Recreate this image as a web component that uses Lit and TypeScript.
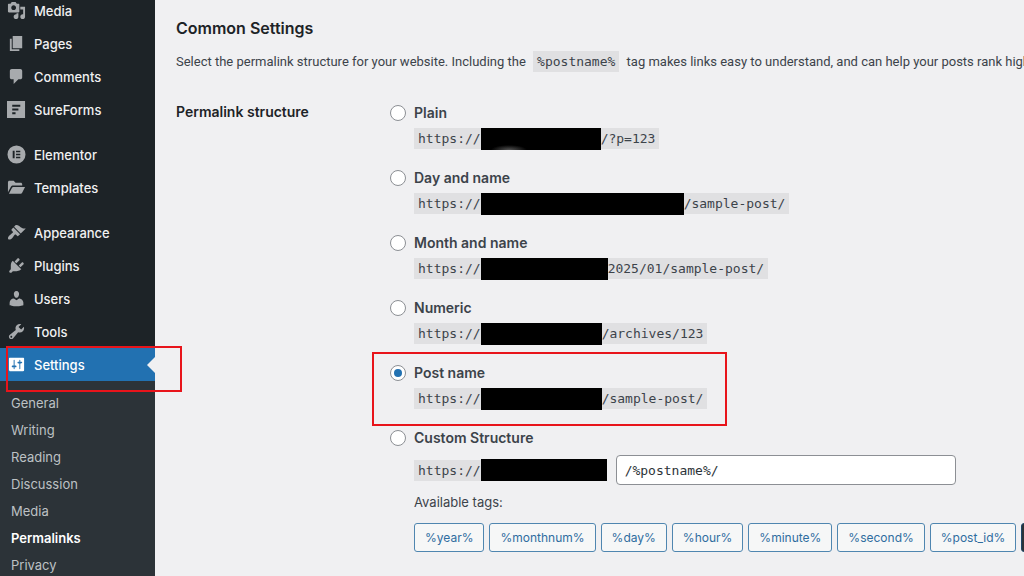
import { LitElement, html, css, svg, nothing } from "lit";
import { customElement, state } from "lit/decorators.js";
import { classMap } from "lit/directives/class-map.js";
import { styleMap } from "lit/directives/style-map.js";

const icons: Record<string, unknown> = {
  media: svg`<path d="M13 11V4c0-.55-.45-1-1-1h-1.67L9 1H5L3.67 3H2c-.55 0-1 .45-1 1v7c0 .55.45 1 1 1h10c.55 0 1-.45 1-1zM7 4.5c1.38 0 2.5 1.12 2.5 2.5S8.38 9.5 7 9.5 4.5 8.38 4.5 7 5.62 4.5 7 4.5zM14 6h5v10.5c0 1.38-1.12 2.5-2.5 2.5S14 17.88 14 16.5s1.12-2.5 2.5-2.5c.17 0 .34.02.5.05V9h-3V6zm-4 8.05V13h2v3.5c0 1.38-1.12 2.5-2.5 2.5S7 17.88 7 16.5 8.12 14 9.5 14c.17 0 .34.02.5.05z"/>`,
  pages: svg`<path d="M6 15V2h10v13H6zm-1 1h8v2H3V5h2v11z"/>`,
  comments: svg`<path d="M5 2h9c1.1 0 2 .9 2 2v7c0 1.1-.9 2-2 2h-2l-5 5v-5H5c-1.1 0-2-.9-2-2V4c0-1.1.9-2 2-2z"/>`,
  sureforms: svg`<path fill-rule="evenodd" d="M0 1h19v18H0zM5.500 5v2.200H14V5zM5.500 8.900v2.200H12V8.900zM5.500 12.800V15H9v-2.200z"/>`,
  elementor: svg`<path fill-rule="evenodd" d="M10 .5a9.5 9.5 0 1 0 0 19 9.5 9.5 0 0 0 0-19zM6 6h2v8H6zM9.5 6H14v1.6H9.500zM9.500 9.200H14v1.600H9.500zM9.500 12.400H14V14H9.500z"/>`,
  templates: svg`<path d="M1 15V4.500C1 3.700 1.700 3 2.500 3H7l2 2h5.500c.8 0 1.500.7 1.500 1.500V8H6.500c-1 0-1.900.5-2.400 1.300zM2 16.500l3.300-6.300c.3-.5.8-.8 1.400-.8H19l-3.200 6.300c-.3.5-.8.8-1.400.8z"/>`,
  appearance: svg`<path d="M14.480 11.060L7.410 3.990l1.500-1.500c.5-.56 2.300-.47 3.510.32 1.210.8 1.430 1.280 2.910 2.100 1.180.64 2.450 1.260 4.450.85zm-.71.71L6.700 4.700 4.930 6.470c-.39.39-.39 1.020 0 1.410l1.060 1.060c.39.39.39 1.030 0 1.420-.6.6-1.430 1.110-2.210 1.690-.35.26-.7.53-1.010.84C1.430 14.230.4 16.080 1.400 17.070c.99 1 2.840-.03 4.180-1.360.31-.31.58-.66.85-1.020.57-.78 1.080-1.610 1.690-2.210.39-.39 1.020-.39 1.410 0l1.060 1.060c.39.39 1.020.39 1.410 0z"/>`,
  plugins: svg`<path d="M13.110 4.360L9.870 7.600 8 5.730l3.240-3.240c.35-.34 1.050-.2 1.560.32.52.51.66 1.210.31 1.550zm-8 1.770l.91-1.120 9.010 9.010-1.190.84c-.71.71-2.630 1.160-3.820 1.160H6.140L4.900 17.260c-.59.59-1.540.59-2.120 0-.59-.58-.59-1.530 0-2.120l1.240-1.240v-3.880c0-1.130.4-3.190 1.090-3.890zm7.260 3.970l3.240-3.240c.34-.35 1.040-.21 1.550.31.52.51.66 1.210.31 1.550l-3.240 3.250z"/>`,
  users: svg`<path d="M10 9.250c-2.270 0-2.730-3.440-2.730-3.440C7 4.020 7.820 2 9.970 2c2.160 0 2.980 2.020 2.710 3.810 0 0-.41 3.440-2.680 3.440zm0 2.570L12.720 10c2.390 0 4.520 2.330 4.520 4.530v2.490s-3.650 1.130-7.240 1.130c-3.650 0-7.240-1.130-7.240-1.130v-2.490c0-2.250 1.940-4.480 4.470-4.480z"/>`,
  tools: svg`<path d="M16.680 9.770c-1.340 1.340-3.300 1.670-4.950.99l-5.410 6.520c-.99.99-2.590.99-3.580 0s-.99-2.590 0-3.570l6.520-5.420c-.68-1.650-.35-3.610.99-4.950 1.280-1.280 3.120-1.620 4.720-1.060l-2.890 2.890 2.820 2.820 2.860-2.870c.53 1.580.18 3.390-1.080 4.650zM3.810 16.210c.4.39 1.040.39 1.430 0 .4-.4.4-1.040 0-1.430-.39-.4-1.030-.4-1.430 0-.39.39-.39 1.030 0 1.430z"/>`,
  settings: svg`<path d="M18 16V4c0-.55-.45-1-1-1H3c-.55 0-1 .45-1 1v12c0 .55.45 1 1 1h14c.55 0 1-.45 1-1zM8 11h1c.55 0 1 .45 1 1s-.45 1-1 1H8v1.500c0 .28-.22.5-.5.5s-.5-.22-.5-.5V13H6c-.55 0-1-.45-1-1s.45-1 1-1h1V5.500c0-.28.22-.5.5-.5s.5.22.5.5V11zm5-2h-1c-.55 0-1-.45-1-1s.45-1 1-1h1V5.500c0-.28.22-.5.5-.5s.5.22.5.5V7h1c.55 0 1 .45 1 1s-.45 1-1 1h-1v5.500c0 .28-.22.5-.5.5s-.5-.22-.5-.5V9z"/>`,
};

const menuGroups = [
  ["Media", "Pages", "Comments", "SureForms"],
  ["Elementor", "Templates"],
  ["Appearance", "Plugins", "Users", "Tools", "Settings"],
];

const submenu = ["General", "Writing", "Reading", "Discussion", "Media", "Permalinks", "Privacy"];

const structures = [
  { id: "plain", label: "Plain", hidden: 120, tail: "/?p=123", glow: true },
  { id: "day", label: "Day and name", hidden: 203, tail: "/sample-post/" },
  { id: "month", label: "Month and name", hidden: 127, tail: "2025/01/sample-post/" },
  { id: "numeric", label: "Numeric", hidden: 121, tail: "/archives/123" },
  { id: "postname", label: "Post name", hidden: 121, tail: "/sample-post/", marked: true },
];

const tags = ["year", "monthnum", "day", "hour", "minute", "second", "post_id", "postname"];

@customElement("app-root")
export class AppRoot extends LitElement {
  @state() private selected = "postname";

  static styles = css`
    :host {
      display: flex;
      height: 100vh;
      overflow: hidden;
      background: #f0f0f2;
      color: #3c434a;
      font: 13px/20px Inter, "Liberation Sans", sans-serif;
    }
    * {
      box-sizing: border-box;
    }
    ul {
      list-style: none;
      margin: 0;
      padding: 0;
    }
    .sidebar {
      flex: 0 0 155px;
      background: #1d2327;
    }
    .menu {
      display: flex;
      flex-direction: column;
      gap: 12px;
      margin-top: -6px;
    }
    .item {
      position: relative;
      display: flex;
      align-items: center;
      gap: 8px;
      height: 33px;
      padding-left: 7px;
      color: #f0f0f1;
      font-size: 13px;
      font-weight: 500;
      text-decoration: none;
    }
    .icon {
      flex: none;
      width: 19px;
      height: 19px;
      fill: #a7aaad;
    }
    .current {
      background: #2271b1;
      color: #fff;
    }
    .current .icon {
      fill: #fff;
    }
    .current::before {
      content: "";
      position: absolute;
      right: 0;
      border: 8px solid transparent;
      border-left: 0;
      border-right-color: #f0f0f2;
    }
    .mark {
      position: absolute;
      border: 2px solid #e8141b;
      pointer-events: none;
    }
    .mark-menu {
      inset: -2px -27px -11px 6px;
      z-index: 1;
    }
    .mark-option {
      inset: -10px -20px -17px -18px;
    }
    .submenu {
      background: #2c3338;
      padding: 9px 0 12px 11px;
    }
    .sub {
      display: block;
      color: #bdc1c4;
      font-size: 13px;
      line-height: 27px;
      text-decoration: none;
    }
    .sub-current {
      color: #fff;
      font-weight: 600;
    }
    .content {
      flex: 1;
      min-width: 0;
      padding: 16px 0 0 21px;
    }
    h2 {
      margin: 0;
      color: #1d2327;
      font-size: 16px;
      line-height: 24px;
      font-weight: 600;
    }
    .intro {
      margin: 11px 0 29px;
      font-family: Roboto, Inter, sans-serif;
      line-height: 22px;
      white-space: nowrap;
    }
    .intro code {
      margin: 0 4px;
    }
    code {
      display: inline-flex;
      align-items: center;
      height: 21px;
      padding: 0 4px;
      background: #e0e0e2;
      color: #3c434a;
      font: 13px/21px "DejaVu Sans Mono", monospace;
      white-space: nowrap;
    }
    .form-row {
      display: grid;
      grid-template-columns: 214px minmax(0, 1fr);
    }
    .row-title {
      color: #1d2327;
      font-size: 14px;
      font-weight: 600;
    }
    .options {
      display: flex;
      flex-direction: column;
      align-items: flex-start;
      gap: 18px;
    }
    .option {
      position: relative;
      display: grid;
      grid-template-columns: 16px auto;
      column-gap: 8px;
      row-gap: 5px;
      align-items: center;
    }
    .option label {
      font-size: 14px;
      line-height: 21px;
      font-weight: 600;
    }
    .detail {
      grid-column: 2;
      display: flex;
      align-items: center;
      gap: 9px;
    }
    .radio {
      appearance: none;
      display: grid;
      place-content: center;
      width: 16px;
      height: 16px;
      margin: 0;
      border: 1px solid #8c8f94;
      border-radius: 50%;
      background: #fff;
    }
    .radio:checked::before {
      content: "";
      width: 8px;
      height: 8px;
      border-radius: 50%;
      background: #2271b1;
    }
    .redacted {
      height: 22px;
      background: #000;
    }
    .glow {
      background: radial-gradient(ellipse 18px 5px at 28px 22px, #555, #000);
    }
    .open-end {
      padding-right: 0;
    }
    .pattern {
      width: 340px;
      height: 30px;
      padding: 0 8px;
      border: 1px solid #8c8f94;
      border-radius: 4px;
      background: #fff;
      color: #2c3338;
      font: 13px/20px "DejaVu Sans Mono", monospace;
    }
    .custom {
      row-gap: 7px;
    }
    .available {
      grid-column: 2;
    }
    .tags {
      grid-column: 2;
      display: flex;
      gap: 5px;
      margin-top: 4px;
    }
    .tag {
      flex: none;
      height: 29px;
      padding: 0 10px;
      border: 1px solid #4f86b0;
      border-radius: 3px;
      background: #f6f7f7;
      color: #2f6d9f;
      font: 12px/20px Inter, "Liberation Sans", sans-serif;
    }
    .tag-active {
      border-color: #1d4568;
      background: #2c3338;
      color: #fff;
    }
  `;

  private renderIcon(name: string) {
    return html`<svg class="icon" viewBox="0 0 20 20" aria-hidden="true">${icons[name]}</svg>`;
  }

  private renderItem(name: string) {
    const current = name === "Settings";
    return html`<li>
      <a href="#" class=${classMap({ item: true, current })}>
        ${this.renderIcon(name.toLowerCase())}${name}
        ${current ? html`<span class="mark mark-menu"></span>` : nothing}
      </a>
    </li>`;
  }

  private renderRadio(id: string) {
    return html`<input
      class="radio"
      type="radio"
      name="structure"
      id=${id}
      .checked=${this.selected === id}
      @change=${() => (this.selected = id)}
    />`;
  }

  private renderAddress(width: number, tail = "", glow = false) {
    return html`<code class=${classMap({ "open-end": !tail })}
      >https://<span
        class=${classMap({ redacted: true, glow })}
        style=${styleMap({ width: `${width}px` })}
      ></span
      >${tail}</code
    >`;
  }

  render() {
    return html`
      <nav class="sidebar">
        <div class="menu">
          ${menuGroups.map((group) => html`<ul>${group.map((name) => this.renderItem(name))}</ul>`)}
        </div>
        <ul class="submenu">
          ${submenu.map(
            (name) => html`<li>
              <a href="#" class=${classMap({ sub: true, "sub-current": name === "Permalinks" })}>${name}</a>
            </li>`
          )}
        </ul>
      </nav>
      <main class="content">
        <h2>Common Settings</h2>
        <p class="intro">
          Select the permalink structure for your website. Including the <code>%postname%</code> tag makes
          links easy to understand, and can help your posts rank higher.
        </p>
        <div class="form-row" role="radiogroup" aria-labelledby="row-title">
          <div class="row-title" id="row-title">Permalink structure</div>
          <div class="options">
            ${structures.map(
              (s) => html`<div class="option">
                ${this.renderRadio(s.id)}<label for=${s.id}>${s.label}</label>
                <div class="detail">${this.renderAddress(s.hidden, s.tail, s.glow)}</div>
                ${s.marked ? html`<span class="mark mark-option"></span>` : nothing}
              </div>`
            )}
            <div class="option custom">
              ${this.renderRadio("custom")}<label for="custom">Custom Structure</label>
              <div class="detail">
                ${this.renderAddress(126)}
                <input class="pattern" type="text" aria-label="Custom structure" value="/%postname%/" />
              </div>
              <div class="available">Available tags:</div>
              <div class="tags">
                ${tags.map(
                  (tag) => html`<button
                    type="button"
                    class=${classMap({ tag: true, "tag-active": tag === "postname" })}
                  >%${tag}%</button>`
                )}
              </div>
            </div>
          </div>
        </div>
      </main>
    `;
  }
}
